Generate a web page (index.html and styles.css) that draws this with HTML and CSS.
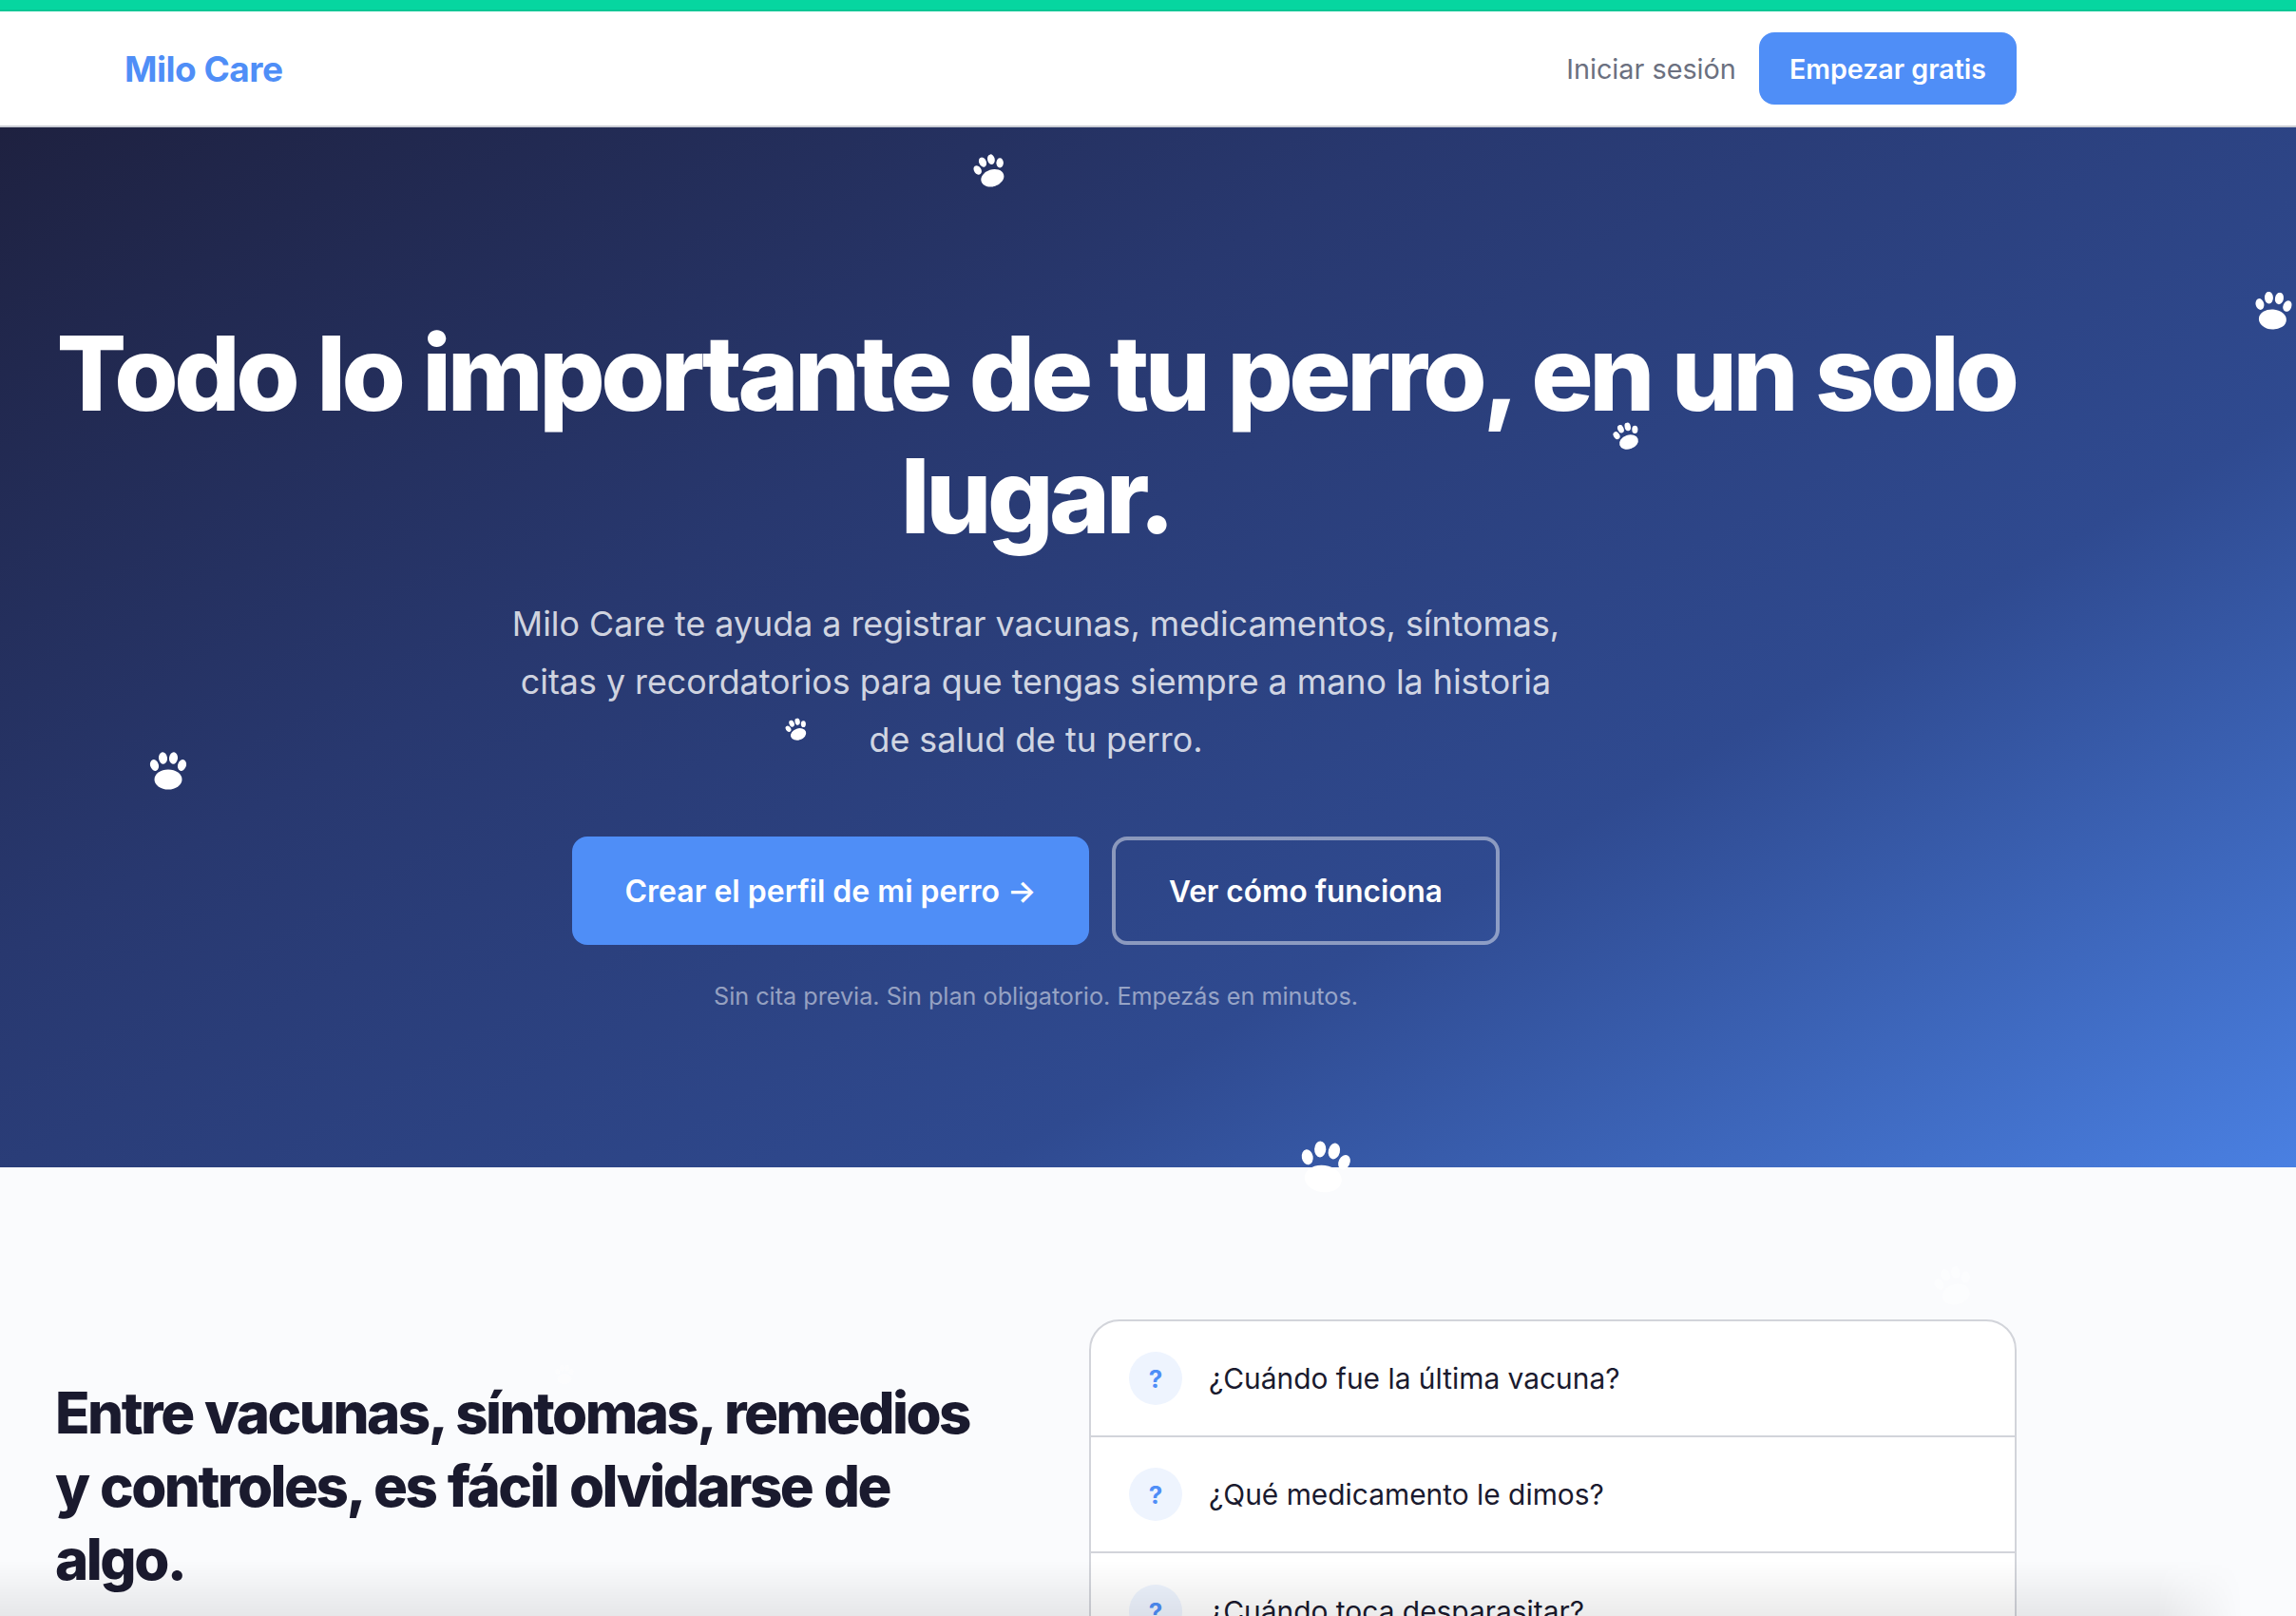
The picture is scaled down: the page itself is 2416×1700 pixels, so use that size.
FILE: index.html
```html
<!DOCTYPE html>
<html lang="es">
<head>
    <meta charset="UTF-8">
    <meta name="viewport" content="width=device-width, initial-scale=1.0">
    <title>Milo Care</title>
    <link rel="stylesheet" href="styles.css">
</head>
<body>
    <svg class="sprite" width="0" height="0">
        <symbol id="paw" viewBox="0 0 40 40">
            <ellipse cx="5.5" cy="14" rx="4.4" ry="6" transform="rotate(-18 5.5 14)"/>
            <ellipse cx="14.5" cy="6.5" rx="4.5" ry="6.3" transform="rotate(-6 14.5 6.5)"/>
            <ellipse cx="25.5" cy="6.5" rx="4.5" ry="6.3" transform="rotate(6 25.5 6.5)"/>
            <ellipse cx="34.5" cy="14" rx="4.4" ry="6" transform="rotate(18 34.5 14)"/>
            <ellipse cx="20" cy="29" rx="14.5" ry="10.5"/>
        </symbol>
    </svg>

    <div class="topbar"></div>
    <nav class="nav">
        <a class="logo" href="#">Milo Care</a>
        <div class="nav-right">
            <a class="nav-link" href="#">Iniciar sesión</a>
            <a class="btn-small" href="#">Empezar gratis</a>
        </div>
    </nav>

    <section class="hero">
        <div class="wrap">
            <h1>Todo lo importante de tu perro, en un solo lugar.</h1>
            <p class="lead">Milo Care te ayuda a registrar vacunas, medicamentos, síntomas, citas y recordatorios para que tengas siempre a mano la historia de salud de tu perro.</p>
            <div class="actions">
                <a class="btn btn-primary" href="#">Crear el perfil de mi perro →</a>
                <a class="btn btn-outline" href="#">Ver cómo funciona</a>
            </div>
            <p class="note">Sin cita previa. Sin plan obligatorio. Empezás en minutos.</p>
        </div>
    </section>

    <section class="problem">
        <div class="wrap problem-grid">
            <h2>Entre vacunas, síntomas, remedios y controles, es fácil olvidarse de algo.</h2>
            <ul class="questions">
                <li><span class="q-mark">?</span>¿Cuándo fue la última vacuna?</li>
                <li><span class="q-mark">?</span>¿Qué medicamento le dimos?</li>
                <li><span class="q-mark">?</span>¿Cuándo toca desparasitar?</li>
            </ul>
        </div>
    </section>

    <!-- huellas decorativas -->
    <svg class="paw paw-1"><use href="#paw"/></svg>
    <svg class="paw paw-2"><use href="#paw"/></svg>
    <svg class="paw paw-3"><use href="#paw"/></svg>
    <svg class="paw paw-4"><use href="#paw"/></svg>
    <svg class="paw paw-5"><use href="#paw"/></svg>
    <svg class="paw paw-6"><use href="#paw"/></svg>
    <svg class="paw paw-7"><use href="#paw"/></svg>
    <svg class="paw paw-8"><use href="#paw"/></svg>

    <div class="bottom-fade"></div>
</body>
</html>
```

FILE: styles.css
```css
* {
    box-sizing: border-box;
}
html, body {
    height: 1700px;
    overflow: hidden;
}
body {
    margin: 0;
    position: relative;
    font-family: Inter, "Noto Sans", sans-serif;
    background: #fafbfd;
    color: #1a1a2e;
}
a {
    text-decoration: none;
}
.sprite {
    position: absolute;
}
.topbar {
    height: 12px;
    background: #06d6a0;
    border-bottom: 2px solid #05c795;
}
.nav {
    height: 122px;
    display: flex;
    align-items: center;
    justify-content: space-between;
    padding: 0 294px 0 131px;
    background: #fff;
    border-bottom: 2px solid #c9ccd4;
}
.logo {
    font-size: 37px;
    font-weight: 700;
    letter-spacing: -0.5px;
    color: #4f8ef7;
}
.nav-right {
    display: flex;
    align-items: center;
    gap: 24px;
}
.nav-link {
    font-size: 28.8px;
    color: #6b7080;
}
.btn-small {
    display: flex;
    align-items: center;
    height: 76px;
    padding: 0 32px;
    border-radius: 16px;
    background: #4f8ef7;
    color: #fff;
    font-size: 28.6px;
    font-weight: 600;
}
.wrap {
    width: 2064px;
    margin-left: 58px;
}
.hero {
    height: 1094px;
    padding-top: 194px;
    text-align: center;
    color: #fff;
    background: linear-gradient(150deg, #1e2140 0%, #28386f 35%, #2f4a90 68%, #4a80e2 100%);
}
h1 {
    margin: 0 -10px;
    font-size: 109px;
    line-height: 129px;
    font-weight: 800;
    letter-spacing: -4.5px;
    word-spacing: 2.5px;
}
.lead {
    width: 1120px;
    margin: 40px auto 0;
    font-size: 35.8px;
    line-height: 61px;
    color: rgba(255, 255, 255, 0.8);
}
.actions {
    display: flex;
    justify-content: center;
    gap: 24px;
    margin-top: 71px;
}
.btn {
    display: flex;
    align-items: center;
    justify-content: center;
    height: 114px;
    border-radius: 16px;
    font-size: 32px;
    font-weight: 600;
    color: #fff;
}
.btn-primary {
    width: 544px;
    background: #4f8ef7;
}
.btn-outline {
    width: 408px;
    font-size: 31.6px;
    border: 4px solid rgba(255, 255, 255, 0.45);
}
.note {
    margin: 38px 0 0;
    font-size: 25.2px;
    line-height: 32px;
    color: rgba(255, 255, 255, 0.5);
}
.problem {
    padding-top: 160px;
}
.problem-grid {
    display: grid;
    grid-template-columns: 1fr 976px;
    gap: 64px;
    align-items: start;
}
h2 {
    max-width: 974px;
    margin: 0;
    padding-top: 60px;
    font-size: 60px;
    line-height: 77px;
    font-weight: 800;
    letter-spacing: -2.5px;
    word-spacing: 1.75px;
}
.questions {
    list-style: none;
    margin: 0;
    padding: 0;
    background: #fff;
    border: 2px solid #d2d4da;
    border-radius: 32px;
}
.questions li {
    display: flex;
    align-items: center;
    gap: 28px;
    height: 122px;
    padding: 0 40px;
    font-size: 29.9px;
    border-bottom: 2px solid #d2d4da;
}
.questions li:last-child {
    border-bottom: 0;
}
.q-mark {
    display: flex;
    align-items: center;
    justify-content: center;
    width: 56px;
    height: 56px;
    border-radius: 50%;
    background: #eef4fe;
    color: #4f8ef7;
    font-size: 26px;
    font-weight: 700;
}
.paw {
    position: absolute;
    fill: #fff;
}
.paw-1 { left: 1025px; top: 163px; width: 34px; height: 34px; transform: rotate(-18deg); }
.paw-2 { left: 2372px; top: 307px; width: 40px; height: 40px; transform: rotate(4deg); }
.paw-3 { left: 1698px; top: 445px; width: 28px; height: 28px; transform: rotate(-18deg); }
.paw-4 { left: 827px; top: 756px; width: 23px; height: 23px; transform: rotate(-18deg); }
.paw-5 { left: 157px; top: 791px; width: 40px; height: 40px; }
.paw-6 { left: 1367px; top: 1199px; width: 54px; height: 58px; transform: rotate(8deg); }
.paw-7 { left: 2036px; top: 1333px; width: 40px; height: 40px; opacity: 0.55; transform: rotate(-15deg); }
.paw-8 { left: 584px; top: 1436px; width: 20px; height: 20px; opacity: 0.4; }
.bottom-fade {
    position: absolute;
    left: 0;
    right: 56px;
    bottom: 0;
    height: 58px;
    background: linear-gradient(to bottom, rgba(0, 0, 0, 0), rgba(0, 0, 0, 0.08));
    -webkit-mask-image: linear-gradient(to left, transparent 0, #000 90px);
    mask-image: linear-gradient(to left, transparent 0, #000 90px);
}
```
